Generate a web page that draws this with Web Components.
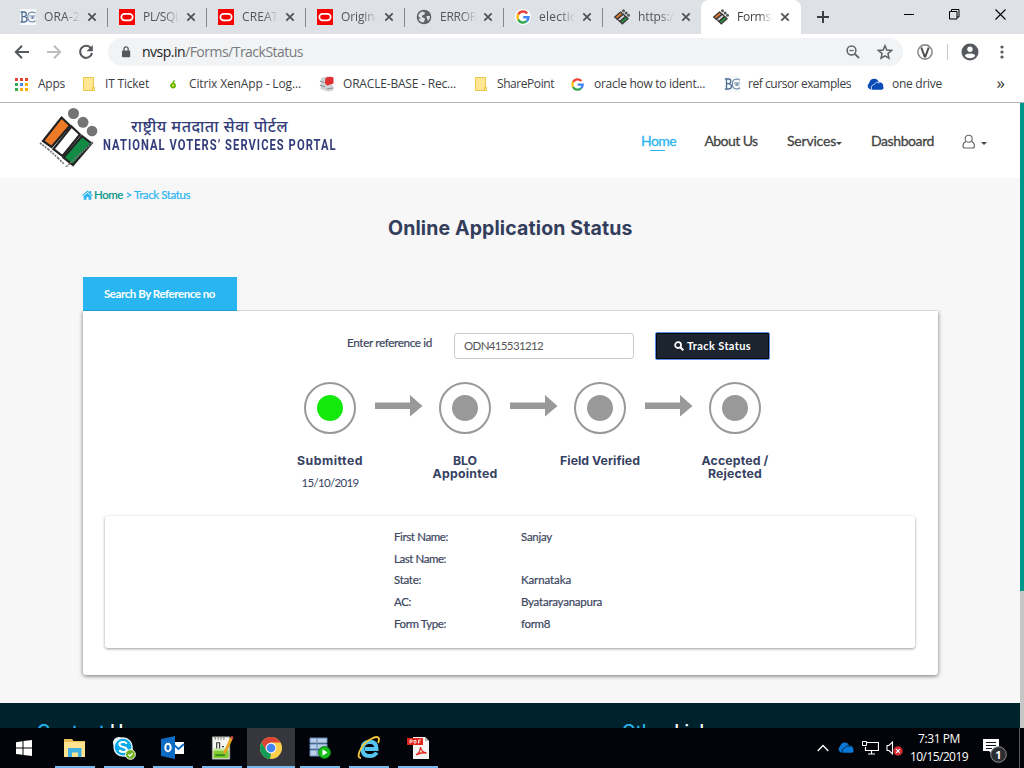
<!DOCTYPE html>
<html lang="en">
<head>
<meta charset="utf-8">
<title>Forms</title>
<style>
html,body{margin:0;height:100%;overflow:hidden}
body{width:1024px;height:768px;display:flex;flex-direction:column;background:#fff;font:12px/16px "Open Sans","Noto Sans",sans-serif;color:#3c4043}
</style>
</head>
<body>
<browser-window></browser-window>
<task-bar></task-bar>
<script>
const ICONS = {
 bc:['0 0 16 16',`<rect width="16" height="16" fill="#f7f8fa"/><path d="M.5 3h3.500q2.300 0 2.300 2.200T4 7.600H2M2 3v10M4 7.600q3 .1 3 2.700T4.200 13H.5" fill="none" stroke="#4e6f95" stroke-width="1.300"/><path d="M15.500 4.200Q14 3 12 3 7.800 3.300 7.800 8t4.200 5q2 0 3.500-1.200M9.500 7h6M12.500 7v3M10.500 9h4" fill="none" stroke="#6c87a6" stroke-width="1.100"/>`],
 ora:['0 0 16 16',`<rect width="16" height="16" fill="#f80000"/><rect x="2.300" y="4.800" width="11.400" height="6.600" rx="3.300" fill="none" stroke="#fff" stroke-width="1.700"/>`],
 globe:['0 0 16 16',`<circle cx="8" cy="8" r="7.300" fill="#5f6368"/><path d="M2.300 7Q3 3.500 6.500 2.500L9 3.500 8.500 5.500 6 6.500v1.700l2.500.8.5 1.500-1.500 3Q3 13 2.500 9.500L5 10z" fill="#dee1e6"/><path d="M10.500 7l3.500 0q.2 3-2 4.800L11 9.500z" fill="#dee1e6"/>`],
 goog:['0 0 16 16',`<circle cx="8" cy="8" r="8" fill="#fff"/><g fill="none" stroke-width="2.500"><path d="M12.100 4.300A5.500 5.500 0 0 0 3.200 5.400" stroke="#ea4335"/><path d="M3.200 5.400a5.500 5.500 0 0 0 0 5.200" stroke="#fbbc05"/><path d="M3.200 10.600a5.500 5.500 0 0 0 8.500 1.500" stroke="#34a853"/><path d="M11.700 12.100A5 5 0 0 0 13.500 8.200H8.200" stroke="#4285f4"/></g>`],
 evm:['0 0 16 16',`<g stroke="#3a3a3a" stroke-width="1.300"><path d="M6.500 3L9 5.200 3.200 10.200.8 8z" fill="#df7931"/><path d="M9.200 5.300l2.300 2.200-5.600 5L3.400 10.300z" fill="#d8d8d8"/><path d="M11.700 7.600L14 9.700l-5.700 5.100L6 12.600z" fill="#27923f"/></g><g fill="#555"><circle cx="9.500" cy="1.800" r="1.500"/><circle cx="12.100" cy="4" r="1.500"/><circle cx="14.500" cy="6.300" r="1.500"/></g>`],
 x:['0 0 10 10',`<path d="M1.300 1.300l7.400 7.400M8.700 1.300L1.300 8.700" stroke="#4c5055" stroke-width="1.700"/>`],
 plus:['0 0 12 12',`<path d="M6 0v12M0 6h12" stroke="#3c4043" stroke-width="2"/>`],
 back:['0 0 16 14',`<path d="M15 7H2M8 .8L1.800 7 8 13.200" fill="none" stroke="#55595e" stroke-width="2"/>`],
 fwd:['0 0 16 14',`<path d="M1 7h13M8 .8L14.200 7 8 13.200" fill="none" stroke="#bbbdbf" stroke-width="2"/>`],
 reload:['0 0 16 16',`<path d="M13 4.300A6 6 0 1 0 14 9" fill="none" stroke="#55595e" stroke-width="2.100"/><path d="M14.800 1v6.300H8.500z" fill="#55595e"/>`],
 lock:['0 0 10 12',`<rect x="1" y="4.500" width="8.200" height="6.800" rx=".8" fill="#55595e"/><path d="M3 5V3a2.100 2.100 0 0 1 4.200 0v2" fill="none" stroke="#55595e" stroke-width="1.300"/>`],
 mag:['0 0 14 14',`<circle cx="5.500" cy="5.500" r="4.400" fill="none" stroke="#5f6368" stroke-width="1.500"/><path d="M8.800 8.800l4.200 4.200" stroke="#5f6368" stroke-width="1.800"/><path d="M3.300 5.500h4.400" stroke="#5f6368" stroke-width="1.200"/>`],
 star:['0 0 16 16',`<path d="M8 1.700l1.800 4.400 4.700.4-3.600 3.100 1.100 4.600L8 11.800l-4 2.400 1.100-4.600L1.500 6.500l4.700-.4z" fill="none" stroke="#5f6368" stroke-width="1.500"/>`],
 vee:['0 0 16 16',`<circle cx="8" cy="8" r="7.100" fill="#fff" stroke="#8c8c8c" stroke-width="1.600"/><path d="M4.300 3.500l3.300 9h.8l3.300-9" fill="none" stroke="#4c4c4c" stroke-width="2"/>`],
 user:['0 0 18 18',`<circle cx="9" cy="9" r="8.500" fill="#55595e"/><circle cx="9" cy="6.300" r="2.700" fill="#fff"/><path d="M3.800 13q0-2.500 5.200-2.600 5.200.1 5.200 2.600-2 2.300-5.200 2.300T3.800 13z" fill="#fff"/>`],
 dots:['0 0 4 14',`<g fill="#55595e"><circle cx="2" cy="2" r="1.600"/><circle cx="2" cy="7" r="1.600"/><circle cx="2" cy="12" r="1.600"/></g>`],
 apps:['0 0 13 13',`<path d="M0 0h3v3H0zM5 0h3v3H5zM10 0h3v3h-3z" fill="#ea4335"/><path d="M0 5h3v3H0z" fill="#34a853"/><path d="M5 5h3v3H5z" fill="#4285f4"/><path d="M10 5h3v3h-3zM5 10h3v3H5zM10 10h3v3h-3z" fill="#f9ab00"/><path d="M0 10h3v3H0z" fill="#34a853"/>`],
 fold:['0 0 12 14',`<path d="M.5.5h10v9.700h1v3.300H.5z" fill="#ffe793" stroke="#eac64b"/><path d="M9.500 13v-3h1.500" fill="none" stroke="#eac64b"/>`],
 citrix:['0 0 8 10',`<circle cx="4" cy="6.500" r="2" fill="#fff" stroke="#5cb400" stroke-width="1.800"/><path d="M4 3.500L5.500 1.500" stroke="#5cb400" stroke-width="1.400"/><circle cx="4" cy="6.500" r="1" fill="#f5d400"/>`],
 obase:['0 0 16 16',`<path d="M2 2l6-1.500 5 1V9l1.500 1.500v4L9 15.500 1.500 13z" fill="#cfd2d5"/><path d="M6.500 2q4-2 8-.5V7.500L8 9.500 5.800 7z" fill="#de2f32"/><path d="M1 5l4 1.500M1 9l5 2M8 13l6-1" stroke="#8b8e92" stroke-width="1.200"/>`],
 cloud:['0 0 16 11',`<path d="M1.500 9.500Q-.5 7 2 4.600 3 .5 7 .6q2.800 0 4 3Q15.500 4 15.300 8q1 2.500-1.300 2.800H5Q2.500 10.800 1.500 9.500z" fill="var(--cl,#0a4bb5)"/><path d="M4.500 10.800Q3 7 6.500 6 8.500 2.500 12 4.500" fill="none" stroke="var(--bg,#fff)" stroke-width=".7"/>`],
 min:['0 0 10 11',`<path d="M0 5.500h10" stroke="#000"/>`],
 max:['0 0 11 11',`<path d="M.5 2.500h7.500v7.500H.5zM2.500 2.500v-2h7.500v7.500H8" fill="none" stroke="#000"/>`],
 close:['0 0 11 11',`<path d="M.5.5l10 10M10.500.5l-10 10" stroke="#000" stroke-width="1.100"/>`],
 logo:['0 0 62 60',`<g stroke="#222" stroke-width="2.200"><path d="M22.500 10.500L31 18.500 12.500 40 4 34z" fill="#ed7a27"/><path d="M32.500 19.500L41 27.500 23.500 49 14.500 42z" fill="#fff"/><path d="M43 29L52.500 36.500 34 58 24.500 50.500z" fill="#118a43"/></g><g fill="#747474"><circle cx="34.500" cy="6.500" r="5.500"/><circle cx="44" cy="15.300" r="5.500"/><circle cx="53" cy="24" r="5.300"/></g><path d="M1 36l8 6M9 42l10 9M19 51l6 6M27 60L54 35" fill="none" stroke="#777" stroke-width="1.700" stroke-dasharray="2 1"/>`],
 fauser:['0 0 14 15',`<path d="M4 7.500Q1 8.500 1 12q0 2 2 2h7.500q2 0 2-2 0-3.500-3-4.500" fill="none" stroke="#666" stroke-width="1.100"/><circle cx="6.700" cy="4.700" r="3.500" fill="#fff" stroke="#666" stroke-width="1.100"/>`],
 house:['0 0 11 10',`<path d="M0 5.200L5.500.6 7.500 2.200V1h1.700v2.700L11 5.200l-.6.7L5.500 1.900.6 5.900z" fill="#2ab4f0"/><path d="M1.700 6L5.500 2.900 9.300 6v3.700H6.500V7h-2v2.700H1.700z" fill="#2ab4f0"/>`],
 search:['0 0 10 10',`<circle cx="4.100" cy="4.100" r="3" fill="none" stroke="#fff" stroke-width="1.700"/><path d="M6.300 6.300L9.300 9.300" stroke="#fff" stroke-width="2"/>`],
 arrow:['0 0 48 22',`<path d="M0 7.500h35V0l12.500 11L35 21.500V14H0z" fill="#999"/>`],
 win:['0 0 16 16',`<path d="M0 2.200L6.500 1.200V7.500H0zM7.500 1L16 0v7.500H7.500zM0 8.500h6.500v6.300L0 13.900zM7.500 8.500H16V16L7.500 15z" fill="#fff"/>`],
 explorer:['0 0 24 22',`<path d="M1 2h8l1.500 2H22v16H1z" fill="#e8bd52"/><path d="M1 5h21v15H1z" fill="#ffe391"/><path d="M5 20v-9h13.500v9H15v-4.500H9V20z" fill="#41b0e2"/>`],
 skype:['0 0 26 26',`<circle cx="7.500" cy="7.500" r="6.500" fill="#e8f7fe"/><circle cx="16.500" cy="16.500" r="6.500" fill="#e8f7fe"/><circle cx="12" cy="12" r="9.800" fill="#09a8e8" stroke="#e8f7fe" stroke-width="1.500"/><path d="M16 8.300Q15 6.500 12 6.500 8 6.500 8 9q0 2.200 4 2.800t4 3q0 2.500-4 2.500-3 0-4.200-2" fill="none" stroke="#fff" stroke-width="2.200"/><circle cx="20" cy="20" r="5.300" fill="#6fb11a" stroke="#fff"/><path d="M17.700 20l1.700 1.700 3-3" fill="none" stroke="#fff" stroke-width="1.300"/>`],
 outlook:['0 0 24 24',`<path d="M11 6h12v12H11z" fill="#fff"/><path d="M12 8l5.500 5L23 8" fill="none" stroke="#0c6cc4" stroke-width="2"/><path d="M0 3l14-3v23L0 20z" fill="#0c6cc4"/><ellipse cx="7" cy="11.500" rx="2.700" ry="3.700" fill="none" stroke="#fff" stroke-width="2"/>`],
 npp:['0 0 24 25',`<path d="M2 1h18v23H2z" fill="#f4f7ef" stroke="#aaa"/><path d="M3 15h16v8H3z" fill="#83ca35"/><path d="M3 13h16v2H3z" fill="#c5e7a2"/><path d="M5 1v3M8 1v3M11 1v3M14 1v3" stroke="#777"/><path d="M6.500 7v6M9.500 7v6M6 7h4M12 11h2" stroke="#333" stroke-width="1.200"/><path d="M5 20h10" stroke="#358818" stroke-width="2"/><path d="M22 2l-6 13-2 3" stroke="#e6a322" stroke-width="3" fill="none"/><path d="M22 0l1 3" stroke="#c44" stroke-width="2"/>`],
 chrome:['0 0 24 24',`<circle cx="12" cy="12" r="11" fill="#fcd04a"/><path d="M2.500 6.500A11 11 0 0 1 21.500 6.500H12L7.200 14.800z" fill="#db4437"/><path d="M2.500 6.500L7.200 14.800 12 17.500 11 23A11 11 0 0 1 2.500 6.500z" fill="#119d58"/><circle cx="12" cy="12" r="5.400" fill="#f2f2f2"/><circle cx="12" cy="12" r="4.300" fill="#4285f4"/>`],
 server:['0 0 24 24',`<g fill="#bad0e9" stroke="#6688b7"><path d="M2 2h17v5H2zM2 8h17v5H2zM2 14h17v6H2z"/></g><path d="M9 2v18" stroke="#6688b7"/><circle cx="16.500" cy="16.500" r="6" fill="#17bd19" stroke="#0e7c12"/><path d="M14.500 13.200v6.600l5-3.300z" fill="#fff"/>`],
 ie:['0 0 24 24',`<path d="M19.500 16.500Q18 20 12.500 20 5.500 20 5.500 13t7-7.300q7 0 7 7.300H8" fill="none" stroke="#56c4f0" stroke-width="4"/><path d="M4 22Q0 22 2.500 15.500 6 7 14 3q7-4 8 0 .2 2-1 4" fill="none" stroke="#f1c63b" stroke-width="1.900"/>`],
 pdf:['0 0 24 24',`<path d="M7 1h12l4 4v18H7z" fill="#f4f4f4"/><path d="M19 1v4h4" fill="#bbb"/><path d="M1 2h16v7H1z" fill="#e0251b"/><path d="M10 19q4-2 4.500-8 .5 5 6 6-5-1-10.500 2z" fill="none" stroke="#e0251b" stroke-width="1.300"/><path d="M4 7.500V4h2v2H4M8 4v3h2V4.500H8M12.500 7.500V4H15M12.500 6H14" stroke="#fff" stroke-width=".8" fill="none"/>`],
 chev:['0 0 12 8',`<path d="M.7 7L6 1.500 11.300 7" fill="none" stroke="#fff" stroke-width="1.300"/>`],
 net:['0 0 17 14',`<path d="M4.500 1.500h12v8H3.500V6M9.500 9.500v3.500M6 13h7" fill="none" stroke="#fff" stroke-width="1.200"/><path d="M.5.5h4v4h-4z" fill="#05070b" stroke="#fff"/>`],
 vol:['0 0 18 15',`<path d="M1 4.500h2L6.500 1v12L3 9.500H1z" fill="none" stroke="#fff" stroke-width="1.100"/><circle cx="12" cy="10" r="4.700" fill="#d62b32"/><path d="M10.200 8.200l3.600 3.600M13.800 8.200l-3.600 3.600" stroke="#fff" stroke-width="1.200"/>`],
 note:['0 0 26 26',`<path d="M1 1h16v12H11v4l-4-4H1z" fill="#fff"/><path d="M4 4.500h10M4 7.500h10M4 10.500h6" stroke="#101319"/><circle cx="16.500" cy="16.500" r="7.800" fill="#2b2d31" stroke="#8f9093"/>`],
};
const ic=(n,w,h,s='')=>`<svg width="${w}" height="${h}" viewBox="${ICONS[n][0]}" style="display:block;flex:none;${s}">${ICONS[n][1]}</svg>`;
const make=(name,css,html,init)=>customElements.define(name,class extends HTMLElement{
  connectedCallback(){
    if(this.shadowRoot)return;
    const r=this.attachShadow({mode:'open'});
    r.innerHTML=`<style>*{box-sizing:border-box}${css}</style>${typeof html==='function'?html(this):html}`;
    if(init)init(this,r);
  }
});
const A=(e,k)=>e.getAttribute(k)||'';

make('browser-window',`:host{display:flex;flex-direction:column;height:728px;flex:none;overflow:hidden}
 .view{display:flex;flex:1;min-height:0;border-top:1px solid #b6b6b8}
 .bar{width:4px;background:#c6c6c6}.bar i{display:block;height:488px;background:#009688}`,
 `<tab-strip></tab-strip><address-bar></address-bar><bookmark-bar></bookmark-bar><div class="view"><portal-page></portal-page><div class="bar"><i></i></div></div>`);

make('tab-strip',`:host{display:flex;height:34px;flex:none;background:#dee1e6;padding-left:8px}
 .plus{padding:11px 0 0 16px;width:103px}.w{display:flex;padding-top:9px;gap:35px}`,
 [['bc','ORA-2',36],['ora','PL/SQL',38],['ora','CREATE',43],['ora','Original',43],['globe','ERROR',37],['goog','election',46],['evm','https://',40]].map(([i,t,w])=>`<browser-tab icon="${i}" label="${t}" w="${w}"></browser-tab>`).join('')+
 `<browser-tab icon="evm" label="FormsI" w="37" active></browser-tab><div class="plus">${ic('plus',12,12)}</div><div class="w">${ic('min',10,11)}${ic('max',11,11)}${ic('close',11,11)}</div>`);
make('browser-tab',`:host{display:flex;align-items:center;width:99px;height:34px;padding-left:12px;flex:none;position:relative;color:#53565b}
 :host([active]){background:#fff;width:100px;border-radius:8px 8px 0 0;color:#3c4043}
 .l{width:36px;margin:0 7px 0 8px;overflow:hidden;-webkit-mask:linear-gradient(90deg,#000 60%,transparent)}
 :host(:not([active]))::after{content:"";position:absolute;right:-1px;top:8px;width:1px;height:19px;background:#85888c}
 :host([label="https://"])::after{display:none}`,
 e=>`${ic(A(e,'icon'),16,16)}<div class="l"><fit-text w="${A(e,'w')}">${A(e,'label')}</fit-text></div>${ic('x',10,10)}`);
make('address-bar',`:host{display:flex;align-items:center;height:36px;flex:none;padding:0 16px 0 14px;background:#fff}
 .pill{display:flex;align-items:center;width:795px;height:28px;border-radius:14px;background:#f1f3f4;margin-left:14px;padding:0 10px 0 13px;font-size:14px;line-height:20px;color:#777b80}
 b{font-weight:400;color:#202124}.sp{flex:1}.sep{width:1px;height:16px;background:#c9cbce;margin:0 14px 0 14px}`,
 `${ic('back',16,14)}${ic('fwd',16,14,'margin:0 17px 0 16px')}${ic('reload',16,16,'margin-left:-1px')}<div class="pill">${ic('lock',10,12,'margin-right:11px')}<fit-text w="161"><b>nvsp.in</b>/Forms/TrackStatus</fit-text><span class="sp"></span>${ic('mag',14,14,'margin-right:17px')}${ic('star',16,16)}</div>${ic('vee',16,16,'margin-left:14px')}<div class="sep"></div>${ic('user',18,18,'margin-left:-1px')}${ic('dots',4,14,'margin-left:21px')}`);
make('bookmark-bar',`:host{display:flex;align-items:center;height:32px;flex:none;background:#fff;padding-bottom:4px}
 .m{font-size:17px;margin-left:auto;margin-right:19px;line-height:16px;padding-bottom:3px;color:#333}
 .b{display:flex;align-items:center;flex:none}`,
 [['apps',13,13,15,38,27,'Apps'],['fold',12,14,83,105,44,'IT Ticket'],['citrix',8,10,169,189,112,'Citrix XenApp - Log...'],['obase',16,16,319,343,113,'ORACLE-BASE - Rec...'],['fold',12,14,475,497,57,'SharePoint'],['goog',15,15,570,594,111,'oracle how to ident...'],['bc',17,16,724,748,103,'ref cursor examples'],['cloud',17,12,867,892,50,'one drive']].reduce((a,[i,w,h,x,t,tw,s])=>{a.h+=`<div class="b" style="margin-left:${x-a.x}px">${ic(i,w,h,`margin-right:${t-x-w}px`)}<fit-text w="${tw}">${s}</fit-text></div>`;a.x=t+tw;return a},{x:0,h:''}).h+`<span class="m">»</span>`);

make('portal-page',`:host{display:block;width:1020px;height:625px;overflow:hidden;background:#f7f7f7;font-family:Lato,sans-serif;color:#3c4660}
 .crumb{display:flex;align-items:center;height:16px;margin:9px 0 0 82px;color:#2ab4f0;font-size:11.500px;-webkit-text-stroke:.2px}
 .crumb b{font-weight:400;color:#009688}
 h1{margin:12px 0 0 388px;font:700 19.500px/26px Inter,sans-serif;color:#333d5c;height:26px}
 .tab{width:154px;height:34px;margin:36px 0 0 83px;background:#29b6f0;color:#fff;font-weight:700;padding:9px 0 0 21px;font-size:11.500px}
 .card{width:855px;height:364px;margin-left:83px;background:#fff;border-radius:0 0 3px 3px;box-shadow:0 1px 4px rgba(0,0,0,.55);padding:22px 0 0 22px;clip-path:inset(-1px -6px -8px -6px)}
 .form{display:flex;height:26px;margin-left:242px}.form .q{width:107px;padding-top:1px;font-size:11.700px;-webkit-text-stroke:.2px}
 .in{width:180px;height:26px;border:1px solid #ccc;border-radius:3px;padding:4px 8px 4px 9px;font-size:11.500px;color:#555}
 .btn{display:flex;align-items:center;width:115px;height:28px;margin:-1px 0 0 21px;border:1px solid #5b8fe8;background:#1b242f;box-shadow:inset 0 0 0 1px #05080d;color:#fff;font-weight:700;font-size:11px;padding-left:18px;border-radius:2px}
 .steps{display:flex;margin:23px 0 0 180px;height:116px}
 .info{width:810px;height:132px;margin-top:18px;background:#fff;border-radius:3px;box-shadow:0 1px 3px rgba(0,0,0,.4);padding:10px 0 0 289px}
 .foot{display:flex;background:#00222d;margin-top:28px;height:60px;padding:16px 0 0 37px;font:500 18px/26px Inter,sans-serif;color:#fff}
 .foot div{width:585px}.foot i{font-style:normal;color:#2ab4f0}`,
 `<site-header></site-header>
 <div class="crumb">${ic('house',11,10,'margin-right:1px')}<fit-text w="96"><b>Home</b> &gt; Track Status</fit-text></div>
 <h1><fit-text w="244.5">Online Application Status</fit-text></h1>
 <div class="tab"><fit-text w="111">Search By Reference no</fit-text></div>
 <div class="card"><div class="form"><div class="q"><fit-text w="85">Enter reference id</fit-text></div><div class="in"><fit-text w="79">ODN415531212</fit-text></div><div class="btn">${ic('search',10,10,'margin-right:3px')}<fit-text w="64">Track Status</fit-text></div></div>
 <div class="steps"><status-step done date="15/10/2019"><fit-text w="66">Submitted</fit-text></status-step><status-step><fit-text w="24">BLO</fit-text><br><fit-text w="65">Appointed</fit-text></status-step><status-step><fit-text w="80">Field Verified</fit-text></status-step><status-step last><fit-text w="67">Accepted /</fit-text><br><fit-text w="54">Rejected</fit-text></status-step></div>
 <div class="info"><info-row k="First Name:" kw="54" v="Sanjay" vw="31"></info-row><info-row k="Last Name:" kw="52" up></info-row><info-row k="State:" kw="27" v="Karnataka" vw="50"></info-row><info-row k="AC:" kw="17" v="Byatarayanapura" vw="81"></info-row><info-row k="Form Type:" kw="52" v="form8" vw="29"></info-row></div></div>
 <div class="foot"><div><fit-text w="96"><i>Contact</i> Us</fit-text></div><fit-text w="97"><i>Other</i> Links</fit-text></div>`);
make('site-header',`:host{display:flex;height:75px;background:#fff;padding-left:38px}
 .brand{width:236px;margin-left:2px;padding-top:15px;color:#333c7a}
 .hi{font:500 16px/21px "Noto Sans Devanagari","Noto Sans",sans-serif;height:21px;margin-left:28px}
 .en{font:700 14px/14px Roboto,sans-serif;height:14px;margin-top:-1px;transform:scaleX(.8);transform-origin:0 0}
 nav{display:flex;margin-left:302px;padding-top:30px;font-size:14px;color:#444;-webkit-text-stroke:.3px}
 nav>*{flex:none}.home{color:#2ab4f0;width:63.500px;height:20px}.home::after{content:"";display:block;width:15px;height:1px;background:#2ab4f0;margin:1px 0 0 9px}
 .c{display:block;border:3px solid transparent;border-top:3px solid #444;border-bottom:0;height:3px;margin-top:9px}`,
 `${ic('logo',62,60,'margin:4px 0 0 1px')}<div class="brand"><div class="hi"><fit-text w="163">राष्ट्रीय मतदाता सेवा पोर्टल</fit-text></div><div class="en"><fit-text w="292">NATIONAL VOTERS’ SERVICES PORTAL</fit-text></div></div>
 <nav><div class="home"><fit-text w="35">Home</fit-text></div><fit-text w="53" style="margin-right:29.500px">About Us</fit-text><fit-text w="49">Services</fit-text><span class="c" style="margin-right:29px"></span><fit-text w="63" style="margin-right:28px">Dashboard</fit-text>${ic('fauser',14,15,'margin-top:1px')}<span class="c" style="margin-left:5px"></span></nav>`);
make('status-step',`:host{display:grid;grid-template-columns:90px 45px;grid-template-rows:52px 1fr;width:135px;flex:none}
 .ring{width:52px;height:52px;border:2px solid #999;border-radius:50%;margin-left:19px;padding:11px}
 .ring i{display:block;width:26px;height:26px;border-radius:50%;background:#999}
 :host([done]) i{background:#13e90b}.t{width:90px;text-align:center;font:700 12.300px/13px Inter,sans-serif;color:#364263;padding-top:20px}
 .d{font:400 11.500px/16px Lato,sans-serif;margin-top:8px}.a{padding-top:13px}:host([last]) .a{visibility:hidden}`,
 e=>`<div class="ring"><i></i></div><div class="a">${ic('arrow',48,22)}</div><div class="t"><slot></slot>${A(e,'date')?`<div class="d"><fit-text w="57">${A(e,'date')}</fit-text></div>`:''}</div>`);
make('info-row',`:host{display:grid;grid-template-columns:127px 200px;height:21.700px;font-size:11.500px;line-height:22px;-webkit-text-stroke:.2px}
 :host([up]){line-height:21px}`,
 e=>`<div><fit-text w="${A(e,'kw')}">${A(e,'k')}</fit-text></div><div>${A(e,'v')?`<fit-text w="${A(e,'vw')}">${A(e,'v')}</fit-text>`:''}</div>`);

make('task-bar',`:host{display:flex;height:40px;flex:none;background:#020409;color:#fff;font-size:12px;overflow:hidden}
 .s{padding:12px 0 0 16px;width:50px}.tray{display:flex;margin-left:auto}.clk{width:58px;text-align:center;line-height:18px;padding-top:2px;margin:0 14px 0 6px}
 .n{position:relative;margin:10px 0 0}.n span{position:absolute;left:0;top:9px;width:33px;text-align:center;font:700 11px/16px "Open Sans",sans-serif}
 .end{width:1px;background:#55585d;margin:0 4px 0 11px}`,
 `<div class="s">${ic('win',16,16)}</div>`+['explorer','skype','outlook','npp','chrome','server','ie','pdf'].map(n=>`<task-item icon="${n}" ${n==='chrome'?'active':''}></task-item>`).join('')+
 `<div class="tray">${ic('chev',12,8,'margin:16px 9px 0 0')}${ic('cloud',16,11,'margin:14px 8px 0 0;--cl:#0a78d7;--bg:#020409')}${ic('net',17,14,'margin:13px 7px 0 0')}${ic('vol',18,15,'margin-top:13px')}<div class="clk"><fit-text w="42">7:31 PM</fit-text><br><fit-text w="58">10/15/2019</fit-text></div><div class="n">${ic('note',26,26)}<span>1</span></div><div class="end"></div></div>`);
make('task-item',`:host{display:flex;flex-direction:column;align-items:center;justify-content:space-between;width:49px;height:40px;padding-top:8px;flex:none}
 :host([active]) {background:linear-gradient(#35373c,#35373c) center/48px 100% no-repeat}
 u{display:block;width:40px;height:2px;background:#76b9ed}:host([active]) u{width:48px}`,
 e=>`${ic(A(e,'icon'),24,24)}<u></u>`);

/* Inline run of text whose tracking is set so that it fills the width in its "w" attribute. */
make('fit-text',`:host{display:inline-block;white-space:pre;vertical-align:top}`,`<slot></slot>`,e=>{
  const w=+A(e,'w'),n=[...e.textContent].length,now=parseFloat(getComputedStyle(e).width);
  e.style.letterSpacing=((w-now)/n)+'px';
  e.style.width=w+'px';
});
</script>
</body>
</html>
